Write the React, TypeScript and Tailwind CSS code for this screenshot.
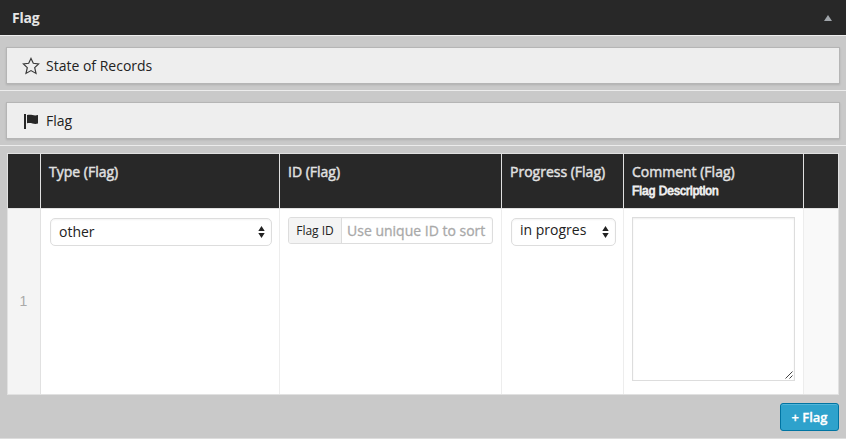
import React from "react";

const columns = "grid grid-cols-[33px_239px_222px_122px_180px_34px]";

function StarIcon() {
  return (
    <svg width="18" height="19" viewBox="0 0 18 19" fill="none" stroke="#3a3a3a" strokeWidth="1.2" strokeLinejoin="miter">
      <path d="M9 2.5 L11.3 7.3 L16.6 7.9 L12.7 11.6 L14 17.4 L9 14.6 L4 17.4 L5.3 11.6 L1.4 7.9 L6.7 7.3 Z" />
    </svg>
  );
}

function FlagIcon() {
  return (
    <svg width="18" height="17" viewBox="0 0 18 17" fill="#272727">
      <path d="M2 2h2v15H2z" />
      <path d="M5 3.1c2-.4 3.6-.4 5.500 0s3.500.4 5.500 0v8.500c-2 .4-3.600.4-5.500-.1S7 11 5 11.300z" />
    </svg>
  );
}

function Section({ icon, title }: { icon: React.ReactNode; title: string }) {
  return (
    <div className="h-[55px] border-b border-[#ececec] px-1.5 pt-[11px]">
      <div className="flex h-[37px] items-center border border-[#b5b5b5] bg-[#eee] pl-[15px] shadow-[0_1px_2px_rgba(0,0,0,0.13)]">
        {icon}
        <span className="ml-1.5">{title}</span>
      </div>
    </div>
  );
}

function Arrows() {
  return (
    <svg width="7" height="12" viewBox="0 0 7 12" fill="#222" className="shrink-0">
      <path d="M3.5 0 L6.7 5 H.3z M.3 7 H6.7 L3.5 12z" />
    </svg>
  );
}

function Select({ value, raised }: { value: string; raised?: boolean }) {
  return (
    <div className="flex h-7 items-center justify-between rounded-[5px] border border-[#ddd] bg-white pr-1.5 pl-2 shadow-[inset_0_1px_2px_rgba(0,0,0,0.05)]">
      <span className={raised ? "-mt-[5px]" : "-mt-0.5"}>{value}</span>
      <Arrows />
    </div>
  );
}

function Head({ title, note }: { title?: string; note?: string }) {
  return (
    <div className="border-r border-[#e1e1e1] pt-2 pl-2 last:border-r-0">
      <div className="leading-[19px] text-[#e1e1e1] [-webkit-text-stroke:0.45px_#e1e1e1]">{title}</div>
      {note && <div className="font-['Liberation_Sans',Arial,sans-serif] text-xs leading-5 text-[#eee] [-webkit-text-stroke:0.8px_#eee]">{note}</div>}
    </div>
  );
}

export default function App() {
  return (
    <div className="h-[439px] w-[846px] overflow-hidden border-b border-[#ddd] bg-[#c9c9c9] font-['Open_Sans',sans-serif] text-sm leading-[19px] text-[#222]">
      <header className="flex h-9 items-center justify-between border-b border-[#eee] bg-[#282828] pr-3.5 pl-3">
        <h1 className="font-bold tracking-[-0.2px] text-[#e5e5e5]">Flag</h1>
        <svg width="8" height="6" viewBox="0 0 8 6" fill="#a0a5aa"><path d="M4 0 L8 6 H0z" /></svg>
      </header>
      <Section icon={<StarIcon />} title="State of Records" />
      <Section icon={<FlagIcon />} title="Flag" />
      <main className="px-[7px] pt-[7px]">
        <div className="w-[832px] border border-[#e1e1e1] bg-white">
          <div className={`${columns} h-[55px] border-b border-[#e1e1e1] bg-[#282828]`}>
            <Head />
            <Head title="Type (Flag)" />
            <Head title="ID (Flag)" />
            <Head title="Progress (Flag)" />
            <Head title="Comment (Flag)" note="Flag Description" />
            <Head />
          </div>
          <div className={`${columns} h-[185px]`}>
            <div className="flex items-center justify-center border-r border-[#e1e1e1] bg-[#f4f4f4] pr-px pb-px font-['Liberation_Sans',Arial,sans-serif] text-sm text-[#aaa]">1</div>
            <div className="border-r border-[#ededed] pt-[9px] pr-[7px] pl-[9px]">
              <Select value="other" />
            </div>
            <div className="border-r border-[#ededed] px-2 pt-2">
              <div className="flex h-[27px] items-center overflow-hidden rounded-[3px] border border-[#ddd] shadow-[inset_0_1px_2px_rgba(0,0,0,0.05)]">
                <span className="flex h-full w-[53px] shrink-0 items-center justify-center border-r border-[#ddd] bg-[#f4f4f4] text-xs">Flag ID</span>
                <span className="pl-[5px] whitespace-nowrap text-[#a9a9a9] [-webkit-text-stroke:0.3px_#a9a9a9]">Use unique ID to sort</span>
              </div>
            </div>
            <div className="border-r border-[#ededed] pt-[9px] pr-[7px] pl-[9px]">
              <Select value="in progres" raised />
            </div>
            <div className="border-r border-[#ededed] px-2 pt-2">
              <div className="flex h-[164px] items-end justify-end border border-[#ddd] p-px shadow-[inset_0_1px_2px_rgba(0,0,0,0.07)]">
                <svg width="8" height="8" viewBox="0 0 8 8" stroke="#444" strokeWidth="1"><path d="M.5 7.5 L7.5 .5 M4.5 7.5 L7.5 4.5" /></svg>
              </div>
            </div>
            <div className="bg-[#f9f9f9]" />
          </div>
        </div>
        <div className="flex justify-end pt-2">
          <button className="h-7 w-[59px] rounded-[3px] border border-[#0074a2] bg-[#2ea2cc] text-[13px] font-semibold text-white shadow-[inset_0_1px_0_rgba(120,200,230,0.5)] [-webkit-text-stroke:0.3px_white]">+ Flag</button>
        </div>
      </main>
    </div>
  );
}
